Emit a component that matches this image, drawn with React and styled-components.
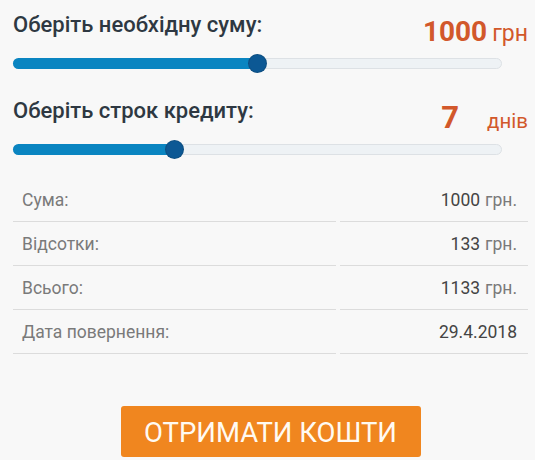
import React from 'react';
import styled, { createGlobalStyle } from 'styled-components';

const GlobalStyle = createGlobalStyle`
  html, body {
    margin: 0;
    padding: 0;
    background: #f8f8f8;
    font-family: Roboto, "Liberation Sans", Arial, sans-serif;
  }
`

const Page = styled.div`
  width: 535px;
  height: 460px;
  box-sizing: border-box;
  padding: 12px 7px 0 13px;
  background: #f8f8f8;
  overflow: hidden;
`

const Header = styled.div`
  display: flex;
  justify-content: space-between;
  align-items: flex-start;
  margin-top: ${p => p.$top || 0}px;
`

const Title = styled.div`
  font-size: 22px;
  line-height: 25px;
  font-weight: 500;
  color: #2e3842;
`

const Value = styled.div`
  display: flex;
  align-items: baseline;
  margin-top: 5px;
  color: #d2582b;
`

const Num = styled.span`
  font-size: ${p => p.$size}px;
  line-height: 29px;
  font-weight: 700;
  margin-right: ${p => p.$gap}px;
`

const Unit = styled.span`
  font-size: ${p => p.$size}px;
  font-weight: 400;
`

const Track = styled.div`
  position: relative;
  height: 11px;
  margin: 11px 26px 0 0;
  box-sizing: border-box;
  border: 1px solid #dde1e5;
  border-radius: 6px;
  background: #eef2f5;
`

const Fill = styled.div`
  position: absolute;
  left: -1px;
  top: -1px;
  bottom: -1px;
  border-radius: 6px 0 0 6px;
  background: #0a85c1;
`

const Thumb = styled.div`
  position: absolute;
  top: 50%;
  width: 17px;
  height: 17px;
  margin: -8.5px 0 0 -8.5px;
  border-radius: 50%;
  background: #0c5894;
  box-shadow: 0 0 0 1px #0e4f82;
`

const Table = styled.div`
  display: grid;
  grid-template-columns: 323px 1fr;
  column-gap: 4px;
  margin-top: 23px;
`

const Cell = styled.div`
  height: 44px;
  box-sizing: border-box;
  border-bottom: 1px solid #dcdcdc;
  display: flex;
  align-items: center;
  justify-content: ${p => (p.$right ? 'flex-end' : 'flex-start')};
  padding: 1px 11px 0 9px;
  font-size: 17.5px;
  color: #7a7a7a;
`

const Strong = styled.span`
  font-weight: 400;
  color: #444;
  margin-right: ${p => (p.$last ? 0 : 5)}px;
`

const Action = styled.div`
  display: flex;
  justify-content: center;
  margin-top: 52px;
`

const Button = styled.button`
  width: 300px;
  height: 51px;
  border: none;
  border-radius: 3px;
  background: #f0861f;
  color: #fffaf2;
  font-family: Roboto, "Liberation Sans", Arial, sans-serif;
  font-size: 27.5px;
  font-weight: 400;
  padding: 2px 0 0;
  cursor: pointer;
`

function Slider({ percent }) {
  return (
    <Track>
      <Fill style={{ width: `calc(${percent}% + 1px)` }} />
      <Thumb style={{ left: `${percent}%` }} />
    </Track>
  );
}

const rows = [
  { label: 'Сума:', num: '1000', unit: 'грн.' },
  { label: 'Відсотки:', num: '133', unit: 'грн.' },
  { label: 'Всього:', num: '1133', unit: 'грн.' },
  { label: 'Дата повернення:', num: '29.4.2018' },
];

export default function App() {
  return (
    <Page>
      <GlobalStyle />
      <Header>
        <Title>Оберіть необхідну суму:</Title>
        <Value>
          <Num $size={28} $gap={5}>1000</Num>
          <Unit $size={23}>грн</Unit>
        </Value>
      </Header>
      <Slider percent={50} />

      <Header $top={29}>
        <Title>Оберіть строк кредиту:</Title>
        <Value>
          <Num $size={31} $gap={28}>7</Num>
          <Unit $size={20.5}>днів</Unit>
        </Value>
      </Header>
      <Slider percent={33} />

      <Table>
        {rows.map(r => (
          <React.Fragment key={r.label}>
            <Cell>{r.label}</Cell>
            <Cell $right>
              <Strong $last={!r.unit}>{r.num}</Strong>
              {r.unit}
            </Cell>
          </React.Fragment>
        ))}
      </Table>

      <Action>
        <Button>ОТРИМАТИ КОШТИ</Button>
      </Action>
    </Page>
  );
}
